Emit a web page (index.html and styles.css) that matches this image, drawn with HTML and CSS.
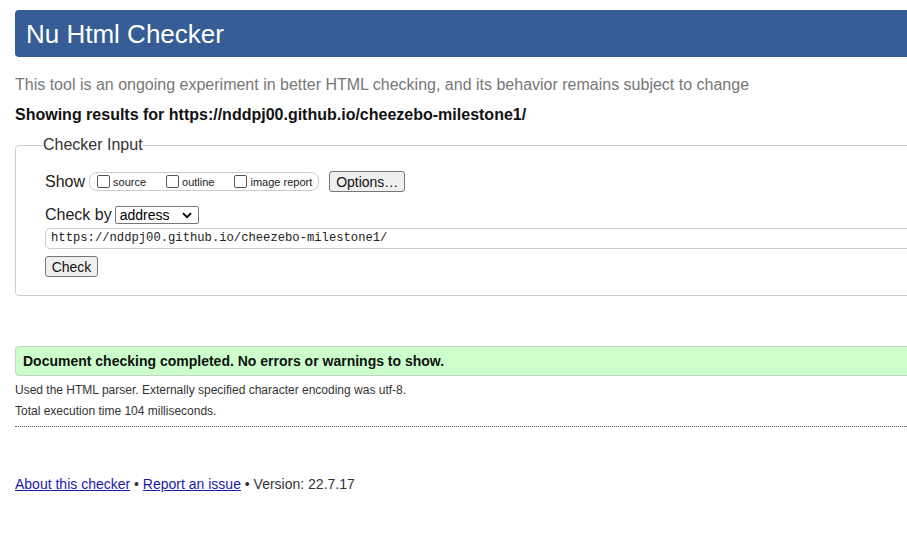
FILE: index.html
```html
<!DOCTYPE html>
<html lang="en">
<head>
<meta charset="utf-8">
<title>Nu Html Checker</title>
<link rel="stylesheet" href="styles.css">
</head>
<body>
<div class="page">
  <header class="banner"><h1 class="title">Nu Html Checker</h1></header>
  <p class="intro">This tool is an ongoing experiment in better HTML checking, and its behavior remains subject to change</p>
  <p class="showing">Showing results for https://nddpj00.github.io/cheezebo-milestone1/</p>

  <fieldset class="input-box">
    <legend class="legend">Checker Input</legend>
    <div class="row show-row">
      <span class="lbl">Show</span>
      <span class="opts">
        <label class="opt"><span class="cb"></span>source</label>
        <label class="opt"><span class="cb"></span>outline</label>
        <label class="opt"><span class="cb"></span>image report</label>
      </span>
      <span class="btn btn-options">Options…</span>
    </div>
    <div class="row by-row">
      <span class="lbl">Check by</span>
      <span class="select">address
        <svg class="chev" width="10" height="7" viewBox="0 0 10 7"><path d="M1 1.2 L5 5.2 L9 1.2" fill="none" stroke="#000" stroke-width="1.8"/></svg>
      </span>
    </div>
    <div class="url">https://nddpj00.github.io/cheezebo-milestone1/</div>
    <span class="btn btn-check">Check</span>
  </fieldset>

  <div class="success">Document checking completed. No errors or warnings to show.</div>
  <p class="meta meta-first">Used the HTML parser. Externally specified character encoding was utf-8.</p>
  <p class="meta">Total execution time 104 milliseconds.</p>
  <hr class="dots">

  <p class="footer"><a href="#">About this checker</a> • <a href="#">Report an issue</a> • Version: 22.7.17</p>
</div>
</body>
</html>
```

FILE: styles.css
```css
html, body {
  margin: 0;
  padding: 0;
  overflow: hidden;
  background: #fff;
}
body {
  font-family: "Liberation Sans", Arial, sans-serif;
  color: #222;
}
.page {
  width: 1100px;
  padding: 10px 0 0 15px;
}
.banner {
  height: 47px;
  background: #365d95;
  border-radius: 4px;
  display: flex;
  align-items: center;
  padding-left: 11px;
}
.title {
  margin: 0;
  font-size: 26px;
  font-weight: normal;
  color: #fff;
  line-height: 30px;
}
.intro {
  margin: 18px 0 0;
  font-size: 16px;
  line-height: 20px;
  color: #777;
}
.showing {
  margin: 10px 0 0;
  font-size: 16px;
  line-height: 20px;
  font-weight: bold;
  color: #111;
}
.input-box {
  margin: 10px 0 0;
  border: 1px solid #ccc;
  border-radius: 4px;
  padding: 16px 29px 18px;
  min-width: 0;
}
.legend {
  padding: 0;
  margin-left: -2px;
  font-size: 16px;
  color: #333;
  line-height: 20px;
}
.row {
  display: flex;
  align-items: center;
}
.lbl {
  font-size: 16px;
  color: #222;
  line-height: 20px;
}
.opts {
  display: flex;
  align-items: center;
  height: 17px;
  margin-left: 4px;
  padding: 0 6px 0 7px;
  border: 1px solid #ccc;
  border-radius: 8px;
}
.opt {
  display: flex;
  align-items: center;
  font-size: 11px;
  color: #222;
  margin-right: 20px;
}
.opt:last-child { margin-right: 0; }
.cb {
  width: 11px;
  height: 11px;
  border: 1px solid #555;
  border-radius: 2px;
  margin-right: 3px;
  background: #fff;
}
.btn {
  display: inline-flex;
  align-items: center;
  justify-content: center;
  font-size: 14px;
  color: #111;
  background: #efefef;
  border: 1px solid #767676;
  border-radius: 3px;
  box-sizing: border-box;
}
.btn-options {
  margin-left: 10px;
  width: 76px;
  height: 21px;
}
.by-row {
  margin-top: 13px;
}
.select {
  display: inline-flex;
  align-items: center;
  justify-content: space-between;
  box-sizing: border-box;
  width: 84px;
  height: 18px;
  margin-left: 3px;
  padding: 0 6px 0 4px;
  border: 1px solid #767676;
  border-radius: 2px;
  font-size: 14px;
  color: #000;
}
.url {
  margin-top: 3px;
  height: 19px;
  border: 1px solid #ccc;
  border-radius: 5px;
  padding-left: 5px;
  font-family: "Liberation Mono", "DejaVu Sans Mono", monospace;
  font-size: 12.2px;
  line-height: 19px;
  color: #222;
}
.btn-check {
  margin-top: 7px;
  width: 53px;
  height: 21px;
}
.success {
  margin-top: 50px;
  height: 28px;
  border: 1px solid #c4d4c4;
  border-radius: 4px;
  background: #ccffcc;
  padding-left: 7px;
  display: flex;
  align-items: center;
  font-size: 14px;
  font-weight: bold;
  color: #111;
}
.meta {
  margin: 0;
  font-size: 12px;
  line-height: 21px;
  color: #333;
}
.meta-first { margin-top: 4px; }
.dots {
  margin: 4px 0 0;
  border: 0;
  border-top: 1px dotted #555;
  height: 0;
}
.footer {
  margin: 48px 0 0;
  font-size: 14px;
  line-height: 18px;
  color: #333;
}
.footer a {
  color: #1a1aa6;
  text-decoration: underline;
}
```
